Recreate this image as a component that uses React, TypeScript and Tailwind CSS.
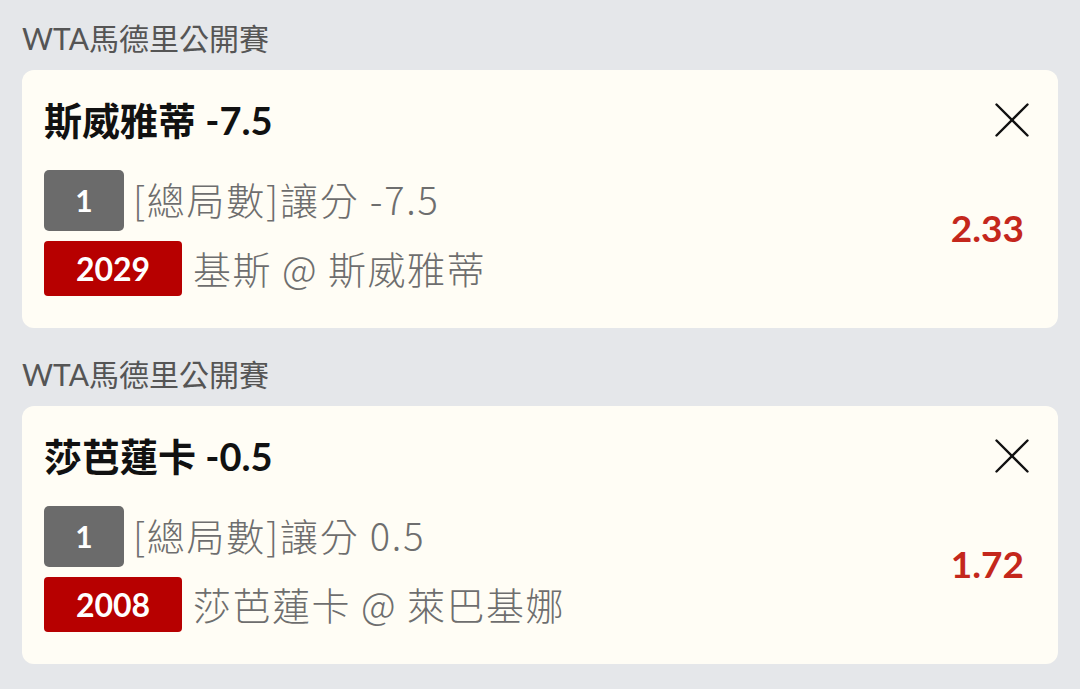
import React from 'react';

type Bet = {
  league: string;
  title: string;
  market: string;
  code: string;
  matchup: string;
  odds: string;
};

const bets: Bet[] = [
  {
    league: 'WTA馬德里公開賽',
    title: '斯威雅蒂 -7.5',
    market: '[總局數]讓分 -7.5',
    code: '2029',
    matchup: '基斯 @ 斯威雅蒂',
    odds: '2.33',
  },
  {
    league: 'WTA馬德里公開賽',
    title: '莎芭蓮卡 -0.5',
    market: '[總局數]讓分 0.5',
    code: '2008',
    matchup: '莎芭蓮卡 @ 萊巴基娜',
    odds: '1.72',
  },
];

const font = { fontFamily: 'Lato, "Noto Sans CJK TC", sans-serif' };
const cjk = { fontFamily: '"Noto Sans CJK TC", sans-serif' };

const CloseIcon = () => (
  <svg width="34" height="34" viewBox="0 0 34 34" fill="none" stroke="#111" strokeWidth="2.4" strokeLinecap="round">
    <path d="M1.5 1.5 L32.5 32.5" />
    <path d="M32.5 1.5 L1.5 32.5" />
  </svg>
);

const BetCard: React.FC<{ bet: Bet }> = ({ bet }) => (
  <div className="rounded-[12px] bg-[#fffdf5] pl-[22px] pr-[29px] pt-[27px] pb-[32px]">
    {/* header */}
    <div className="flex items-center justify-between h-[46px]">
      <div className="text-[38px] font-bold leading-[46px] text-[#111]">{bet.title}</div>
      <button className="flex items-center justify-center">
        <CloseIcon />
      </button>
    </div>

    {/* body */}
    <div className="mt-[27px] flex items-center justify-between">
      <div className="flex flex-col gap-[10px]">
        <div className="flex items-center">
          <div className="flex h-[61px] w-[80px] items-center justify-center rounded-[5px] bg-[#6b6b6b] text-[30px] font-bold text-white">
            1
          </div>
          <div className="ml-[9px] -mt-[4px] text-[38px] font-light leading-[46px] tracking-[1.8px] text-[#6e6e6e]" style={cjk}>
            {bet.market}
          </div>
        </div>
        <div className="flex items-center">
          <div className="flex h-[55px] w-[138px] items-center justify-center rounded-[4px] bg-[#b70000] text-[32px] font-bold text-white">
            {bet.code}
          </div>
          <div className="ml-[11px] -mt-[2px] text-[38px] font-light leading-[46px] tracking-[1.5px] text-[#6e6e6e]" style={cjk}>
            {bet.matchup}
          </div>
        </div>
      </div>
      <div className="mr-[5px] -mt-[10px] text-[37px] font-bold text-[#c4271c]">{bet.odds}</div>
    </div>
  </div>
);

const App: React.FC = () => {
  return (
    <div className="min-h-screen bg-[#e5e7ea] px-[22px]" style={font}>
      {bets.map((bet, i) => (
        <div key={i} className={i === 0 ? 'pt-[20px]' : 'pt-[28px]'}>
          <div className="mb-[14px] text-[30px] leading-[36px] text-[#555]">{bet.league}</div>
          <BetCard bet={bet} />
        </div>
      ))}
    </div>
  );
};

export default App;
